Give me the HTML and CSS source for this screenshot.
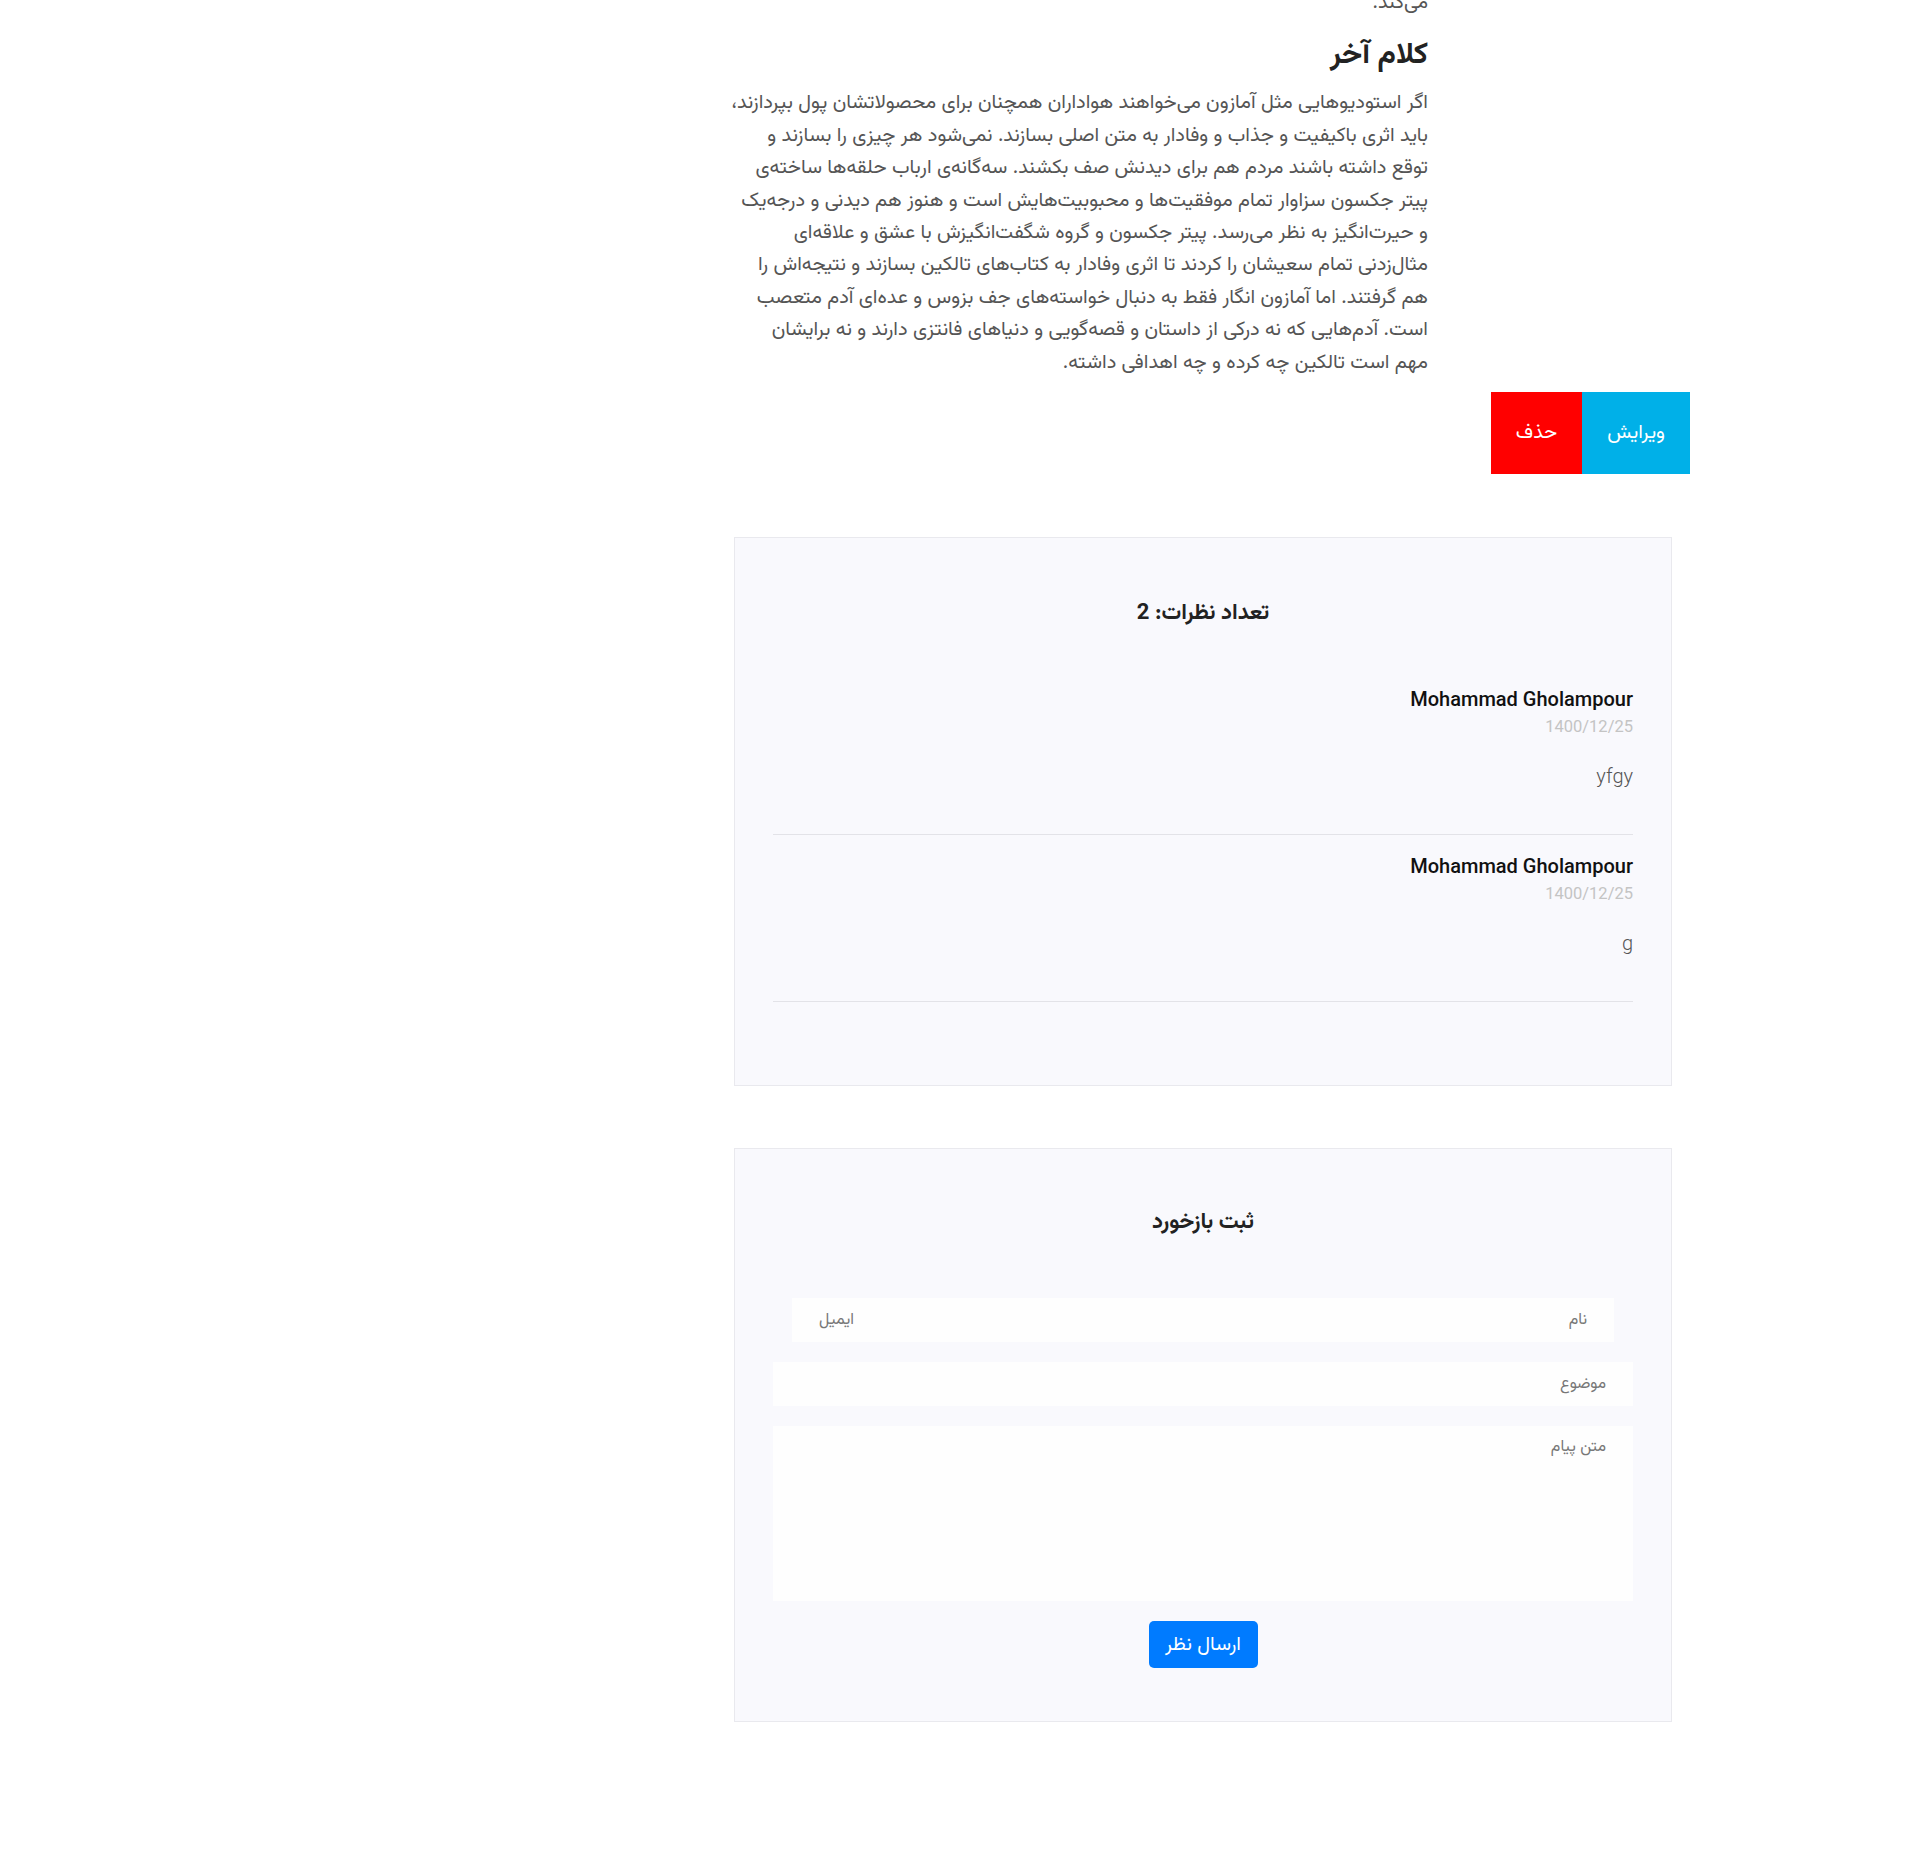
FILE: index.html
```html
<!DOCTYPE html>
<html lang="fa" dir="rtl">
<head>
<meta charset="utf-8">
<title>کلام آخر</title>
<link rel="stylesheet" href="styles.css">
</head>
<body>
<div class="wrapper">
  <article class="post">
    <p class="post-text prev">می‌کند.</p>
    <h2 class="post-heading">کلام آخر</h2>
    <p class="post-text">اگر استودیوهایی مثل آمازون می‌خواهند هواداران همچنان برای محصولاتشان پول بپردازند،<br>باید اثری باکیفیت و جذاب و وفادار به متن اصلی بسازند. نمی‌شود هر چیزی را بسازند و<br>توقع داشته باشند مردم هم برای دیدنش صف بکشند. سه‌گانه‌ی ارباب حلقه‌ها ساخته‌ی<br>پیتر جکسون سزاوار تمام موفقیت‌ها و محبوبیت‌هایش است و هنوز هم دیدنی و درجه‌یک<br>و حیرت‌انگیز به نظر می‌رسد. پیتر جکسون و گروه شگفت‌انگیزش با عشق و علاقه‌ای<br>مثال‌زدنی تمام سعیشان را کردند تا اثری وفادار به کتاب‌های تالکین بسازند و نتیجه‌اش را<br>هم گرفتند. اما آمازون انگار فقط به دنبال خواسته‌های جف بزوس و عده‌ای آدم متعصب<br>است. آدم‌هایی که نه درکی از داستان و قصه‌گویی و دنیاهای فانتزی دارند و نه برایشان<br>مهم است تالکین چه کرده و چه اهدافی داشته.</p>
  </article>

  <div class="actions">
    <a class="btn-action btn-edit" href="#">ویرایش</a>
    <a class="btn-action btn-delete" href="#">حذف</a>
  </div>

  <section class="panel comments">
    <h3 class="panel-title">تعداد نظرات: 2</h3>
    <div class="comment">
      <div class="comment-author">Mohammad Gholampour</div>
      <div class="comment-date">1400/12/25</div>
      <div class="comment-body">yfgy</div>
    </div>
    <div class="comment">
      <div class="comment-author">Mohammad Gholampour</div>
      <div class="comment-date">1400/12/25</div>
      <div class="comment-body">g</div>
    </div>
  </section>

  <section class="panel feedback">
    <h3 class="panel-title form-title">ثبت بازخورد</h3>
    <form class="feedback-form">
      <div class="field-row">
        <input class="field" type="text" placeholder="نام">
        <input class="field field-email" type="email" placeholder="ایمیل">
      </div>
      <input class="field field-full" type="text" placeholder="موضوع">
      <textarea class="field field-area" placeholder="متن پیام"></textarea>
      <div class="submit-row">
        <button class="btn-submit" type="button">ارسال نظر</button>
      </div>
    </form>
  </section>
</div>
</body>
</html>
```

FILE: styles.css
```css
* {
  box-sizing: border-box;
}

html, body {
  margin: 0;
  padding: 0;
  background: #ffffff;
}

body {
  direction: rtl;
  font-family: "Vazirmatn", "Vazir", Roboto, "Noto Sans Arabic", "DejaVu Sans", sans-serif;
  color: #333;
}

.wrapper {
  width: 956px;
  margin-right: 229px;
  margin-left: auto;
  padding-bottom: 150px;
}

.post {
  width: 694px;
  margin-right: auto;
  margin-left: 0;
}

.post-text {
  margin: 0;
  font-size: 20px;
  line-height: 32.4px;
  color: #555;
  white-space: nowrap;
}

.post-text.prev {
  margin-top: -13px;
  margin-bottom: 20px;
}

.post-heading {
  margin: 0 0 14px;
  font-size: 30px;
  line-height: 34px;
  font-weight: 700;
  color: #222;
}

.actions {
  display: flex;
  margin-top: 13px;
}

.btn-action {
  display: block;
  padding: 28px 25px;
  font-size: 20px;
  line-height: 26px;
  color: #fff;
  text-decoration: none;
}

.btn-edit {
  background: #00b0e8;
}

.btn-delete {
  background: #ff0000;
}

.panel {
  width: 938px;
  margin-right: auto;
  margin-left: 0;
  margin-top: 63px;
  background: #f9f9fd;
  border: 1px solid #e9e9ee;
  padding: 0 38px;
}

.comments {
  padding-top: 60px;
  padding-bottom: 83px;
}

.panel-title {
  margin: 0 0 38px;
  text-align: center;
  font-size: 22px;
  line-height: 32px;
  font-weight: 700;
  color: #222;
}

.comment {
  padding: 19px 0 44px;
  border-bottom: 1px solid #e3e3e8;
  font-family: Roboto, "Vazirmatn", "DejaVu Sans", sans-serif;
}

.comment-author {
  font-size: 20px;
  line-height: 24px;
  font-weight: 500;
  color: #111;
}

.comment-date {
  margin-top: 6px;
  font-size: 16.5px;
  line-height: 20px;
  color: #c4c4c4;
}

.comment-body {
  margin-top: 25px;
  font-size: 20px;
  line-height: 28px;
  font-weight: 300;
  color: #555;
}

.feedback {
  margin-top: 62px;
  padding-top: 58px;
  padding-bottom: 53px;
}

.form-title {
  margin-bottom: 59px;
}

.feedback-form {
  display: flex;
  flex-direction: column;
}

.field-row {
  display: flex;
  margin: 0 19px 20px;
}

.field {
  display: block;
  height: 44px;
  border: 0;
  background: #fefefe;
  padding: 0 27px;
  font-family: inherit;
  font-size: 16px;
  color: #555;
  outline: none;
}

.field::placeholder {
  color: #777;
}

.field-row .field {
  flex: 1 1 0;
  min-width: 0;
}

.field-email {
  text-align: left;
  direction: rtl;
}

.field-email::placeholder {
  text-align: left;
}

.field-full {
  width: 100%;
  margin-bottom: 20px;
}

.field-area {
  width: 100%;
  height: 175px;
  padding-top: 10px;
  resize: none;
  line-height: 24px;
  margin-bottom: 20px;
}

.submit-row {
  display: flex;
  justify-content: center;
}

.btn-submit {
  width: 109px;
  height: 47px;
  border: 0;
  border-radius: 5px;
  background: #007bff;
  color: #fff;
  font-family: inherit;
  font-size: 20px;
  cursor: pointer;
}
```
